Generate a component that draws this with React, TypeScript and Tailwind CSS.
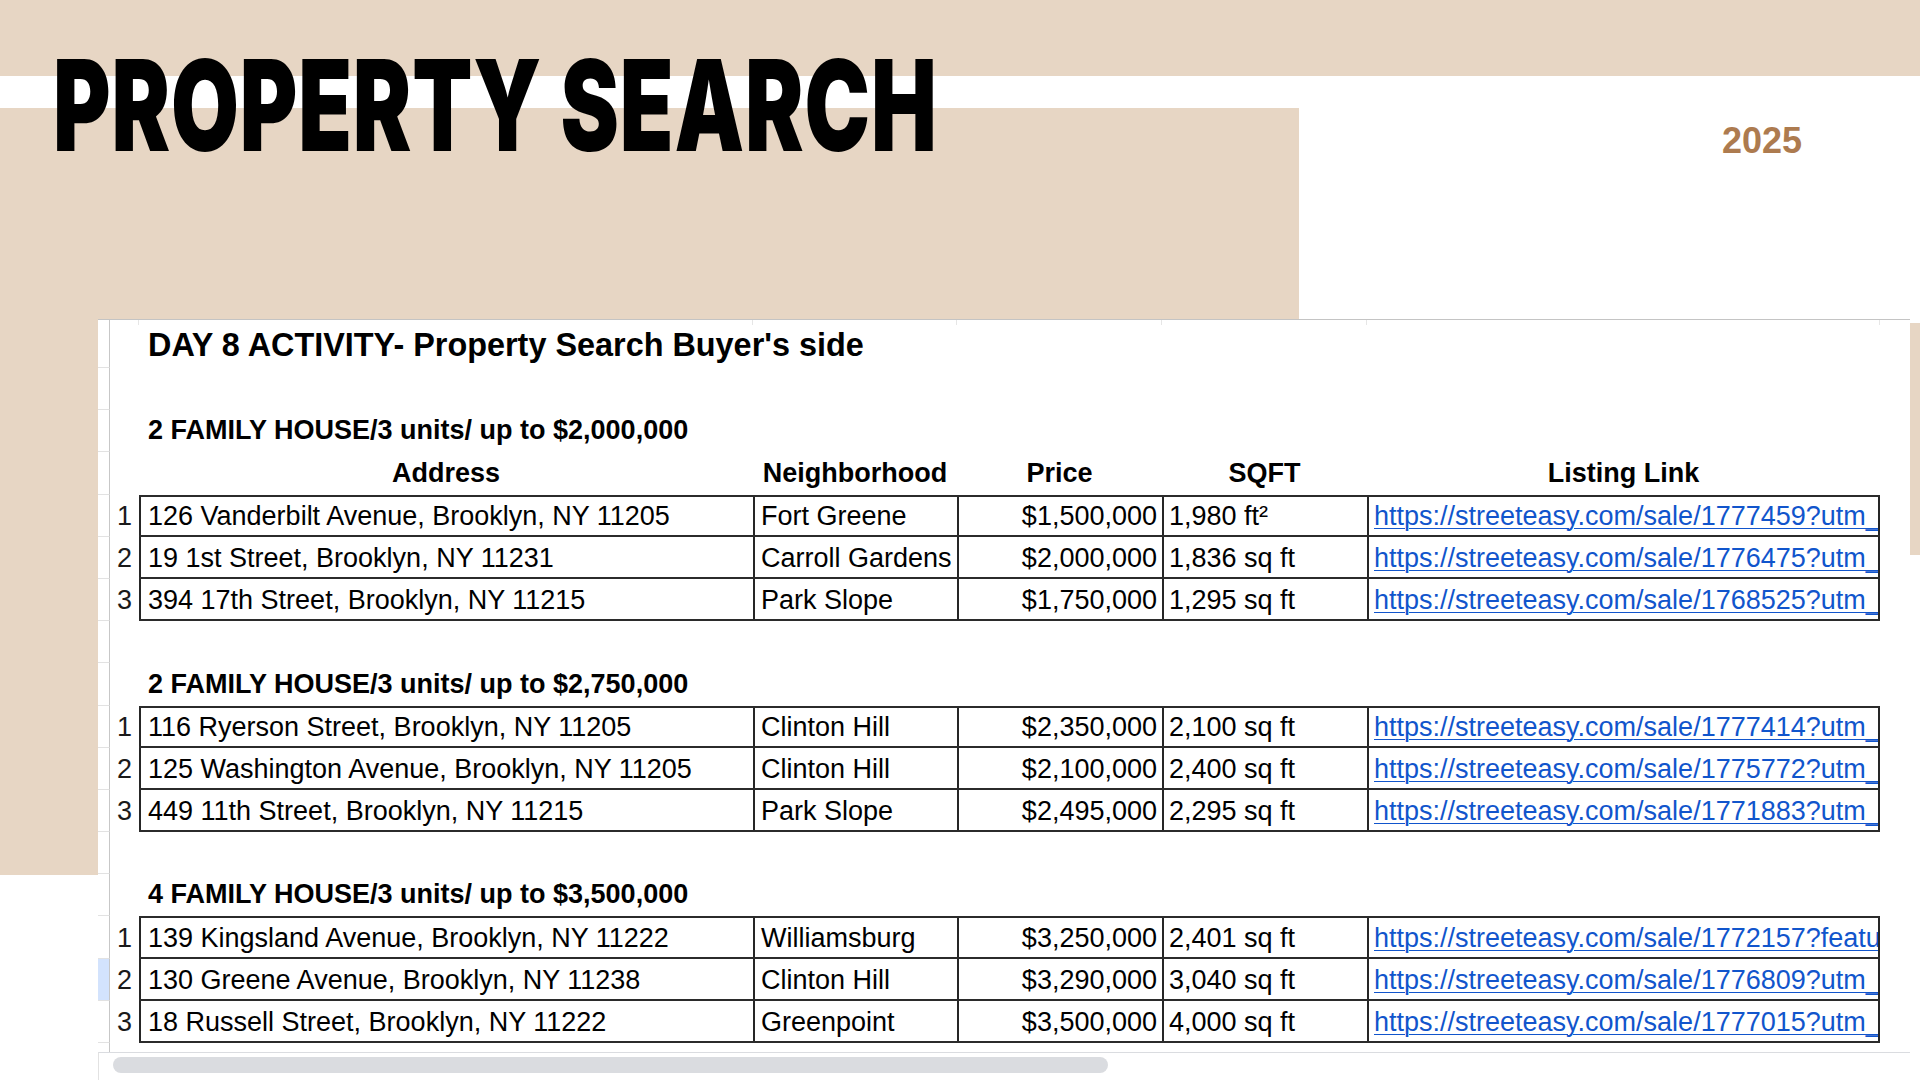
import React from 'react';

type Row = {
  n: string;
  address: string;
  hood: string;
  price: string;
  sqft: string;
  link: string;
};

const table1: Row[] = [
  { n: '1', address: '126 Vanderbilt Avenue, Brooklyn, NY 11205', hood: 'Fort Greene', price: '$1,500,000', sqft: '1,980 ft²', link: 'https://streeteasy.com/sale/1777459?utm_' },
  { n: '2', address: '19 1st Street, Brooklyn, NY 11231', hood: 'Carroll Gardens', price: '$2,000,000', sqft: '1,836 sq ft', link: 'https://streeteasy.com/sale/1776475?utm_' },
  { n: '3', address: '394 17th Street, Brooklyn, NY 11215', hood: 'Park Slope', price: '$1,750,000', sqft: '1,295 sq ft', link: 'https://streeteasy.com/sale/1768525?utm_' },
];

const table2: Row[] = [
  { n: '1', address: '116 Ryerson Street, Brooklyn, NY 11205', hood: 'Clinton Hill', price: '$2,350,000', sqft: '2,100 sq ft', link: 'https://streeteasy.com/sale/1777414?utm_' },
  { n: '2', address: '125 Washington Avenue, Brooklyn, NY 11205', hood: 'Clinton Hill', price: '$2,100,000', sqft: '2,400 sq ft', link: 'https://streeteasy.com/sale/1775772?utm_' },
  { n: '3', address: '449 11th Street, Brooklyn, NY 11215', hood: 'Park Slope', price: '$2,495,000', sqft: '2,295 sq ft', link: 'https://streeteasy.com/sale/1771883?utm_' },
];

const table3: Row[] = [
  { n: '1', address: '139 Kingsland Avenue, Brooklyn, NY 11222', hood: 'Williamsburg', price: '$3,250,000', sqft: '2,401 sq ft', link: 'https://streeteasy.com/sale/1772157?featu' },
  { n: '2', address: '130 Greene Avenue, Brooklyn, NY 11238', hood: 'Clinton Hill', price: '$3,290,000', sqft: '3,040 sq ft', link: 'https://streeteasy.com/sale/1776809?utm_' },
  { n: '3', address: '18 Russell Street, Brooklyn, NY 11222', hood: 'Greenpoint', price: '$3,500,000', sqft: '4,000 sq ft', link: 'https://streeteasy.com/sale/1777015?utm_' },
];

function Gutter({ highlight = false, noBottom = false }: { highlight?: boolean; noBottom?: boolean }) {
  return (
    <div
      className={`w-[12px] shrink-0 h-full border-r border-r-[#c7c7c7] ${noBottom ? '' : 'border-b border-b-[#e2e2e2]'} ${highlight ? 'bg-[#d3e3fd]' : 'bg-white'}`}
    />
  );
}

function Line({ highlight = false, children }: { highlight?: boolean; children?: React.ReactNode }) {
  return (
    <div className="flex h-[42.2px]">
      <Gutter highlight={highlight} />
      {children}
    </div>
  );
}

function TextLine({ children, bold = false, big = false }: { children: React.ReactNode; bold?: boolean; big?: boolean }) {
  return (
    <div
      className={`flex items-end pl-[38px] whitespace-nowrap text-black ${bold ? 'font-bold' : ''} ${big ? 'text-[32.4px] leading-[36px] pb-[5px]' : 'text-[27px] leading-[30px] pb-[7px]'}`}
    >
      {children}
    </div>
  );
}

function HeaderRow() {
  return (
    <Line>
      <div className="w-[29px] shrink-0" />
      <div className="flex font-bold text-[27px] leading-[30px] text-black">
        <div className="w-[614px] flex items-end justify-center pb-[7px]">Address</div>
        <div className="w-[204px] flex items-end justify-center pb-[7px]">Neighborhood</div>
        <div className="w-[205px] flex items-end justify-center pb-[7px]">Price</div>
        <div className="w-[205px] flex items-end justify-center pb-[7px]">SQFT</div>
        <div className="w-[513px] flex items-end justify-center pb-[7px]">Listing Link</div>
      </div>
    </Line>
  );
}

function DataRow({ row, first, highlight = false }: { row: Row; first: boolean; highlight?: boolean }) {
  const cell = 'flex items-end pb-[4px] whitespace-nowrap overflow-hidden border-l-2 border-l-[#262626]';
  return (
    <Line highlight={highlight}>
      <div className="w-[29px] shrink-0 flex items-end justify-end pr-[7px] pb-[6px] text-[27px] leading-[30px] text-[#1a1a1a]">
        {row.n}
      </div>
      <div
        className={`flex text-[27px] leading-[30px] text-black border-b-2 border-b-[#2b2b2b] ${first ? 'border-t-2 border-t-[#2b2b2b]' : ''}`}
      >
        <div className={`w-[614px] pl-[7px] ${cell}`}>{row.address}</div>
        <div className={`w-[204px] pl-[6px] ${cell}`}>{row.hood}</div>
        <div className={`w-[205px] justify-end pr-[5px] ${cell}`}>{row.price}</div>
        <div className={`w-[205px] pl-[5px] ${cell}`}>{row.sqft}</div>
        <div className={`w-[513px] pl-[5px] border-r-2 border-r-[#262626] ${cell}`}>
          <span className="text-[#1155cc] underline decoration-1 underline-offset-[3px]">{row.link}</span>
        </div>
      </div>
    </Line>
  );
}

function Table({ rows, highlightIndex = -1 }: { rows: Row[]; highlightIndex?: number }) {
  return (
    <>
      {rows.map((r, i) => (
        <DataRow key={i} row={r} first={i === 0} highlight={i === highlightIndex} />
      ))}
    </>
  );
}

function Sheet() {
  return (
    <div className="ml-[98px] w-[1812px] flex-1 flex flex-col bg-white border-t border-t-[#c4c4c4] font-['Liberation_Sans',Arial,sans-serif]">
      {/* title row with faint column ticks */}
      <div className="flex h-[48px]">
        <Gutter />
        <div className="flex-1 flex flex-col">
          <div className="flex h-[5px]">
            <div className="w-[29px] shrink-0 border-r border-r-[#e6e6e6]" />
            <div className="w-[614px] border-r border-r-[#e6e6e6]" />
            <div className="w-[204px] border-r border-r-[#e6e6e6]" />
            <div className="w-[205px] border-r border-r-[#e6e6e6]" />
            <div className="w-[205px] border-r border-r-[#e6e6e6]" />
            <div className="w-[513px] border-r border-r-[#e6e6e6]" />
          </div>
          <div className="flex-1 flex">
            <TextLine bold big>
              DAY 8 ACTIVITY- Property Search Buyer&apos;s side
            </TextLine>
          </div>
        </div>
      </div>
      <Line />
      <Line>
        <TextLine bold>2 FAMILY HOUSE/3 units/ up to $2,000,000</TextLine>
      </Line>
      <HeaderRow />
      <Table rows={table1} />
      <Line />
      <Line>
        <TextLine bold>2 FAMILY HOUSE/3 units/ up to $2,750,000</TextLine>
      </Line>
      <Table rows={table2} />
      <Line />
      <Line>
        <TextLine bold>4 FAMILY HOUSE/3 units/ up to $3,500,000</TextLine>
      </Line>
      <Table rows={table3} highlightIndex={1} />
      <div className="flex h-[9px]">
        <Gutter noBottom />
      </div>
      <div className="flex-1 border-t border-t-[#dadce0] border-l border-l-[#e2e2e2] bg-white pl-[14px] pt-[4px]">
        <div className="w-[995px] h-[16px] rounded-full bg-[#dadce0]" />
      </div>
    </div>
  );
}

export default function App() {
  return (
    <div className="relative w-[1920px] h-[1080px] overflow-hidden bg-white font-['Liberation_Sans',Arial,sans-serif]">
      {/* decorative background shapes */}
      <div className="absolute left-0 top-0 w-full h-[76px] bg-[#e7d6c4]" />
      <div className="absolute left-0 top-[108px] w-[1299px] h-[211px] bg-[#e7d6c4]" />
      <div className="absolute left-0 top-[319px] w-[98px] h-[556px] bg-[#e7d6c4]" />
      <div className="absolute right-0 top-[323px] w-[10px] h-[232px] bg-[#e7d6c4]" />

      <div className="relative flex flex-col h-full">
        <header className="flex h-[319px] shrink-0">
          <div className="flex-1 pl-[53px] pt-[42px]">
            <h1 className="origin-left scale-x-[0.696] font-['Inter',sans-serif] text-[126px] leading-none font-black text-black tracking-[0.01em] whitespace-nowrap">
              PROPERTY SEARCH
            </h1>
          </div>
          <div className="pt-[123px] pr-[118px]">
            <div className="text-[36px] leading-none font-bold text-[#ad7b4f]">2025</div>
          </div>
        </header>
        <Sheet />
      </div>
    </div>
  );
}
